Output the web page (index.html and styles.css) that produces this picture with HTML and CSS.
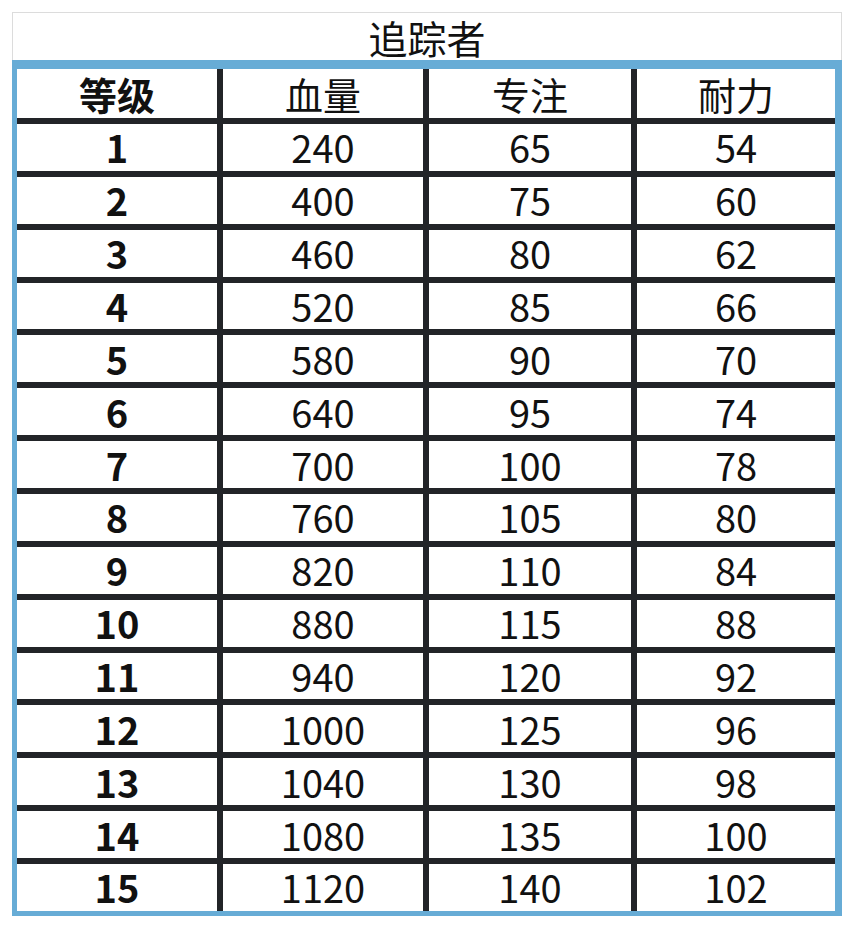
FILE: index.html
```html
<!DOCTYPE html>
<html lang="zh">
<head>
<meta charset="utf-8">
<title>追踪者</title>
<link rel="stylesheet" href="styles.css">
</head>
<body>
<div class="sheet">
  <div class="title">追踪者</div>
  <div class="table">
    <div class="cell head">等级</div><div class="cell">血量</div><div class="cell">专注</div><div class="cell">耐力</div>
    <div class="cell lv">1</div><div class="cell">240</div><div class="cell">65</div><div class="cell">54</div>
    <div class="cell lv">2</div><div class="cell">400</div><div class="cell">75</div><div class="cell">60</div>
    <div class="cell lv">3</div><div class="cell">460</div><div class="cell">80</div><div class="cell">62</div>
    <div class="cell lv">4</div><div class="cell">520</div><div class="cell">85</div><div class="cell">66</div>
    <div class="cell lv">5</div><div class="cell">580</div><div class="cell">90</div><div class="cell">70</div>
    <div class="cell lv">6</div><div class="cell">640</div><div class="cell">95</div><div class="cell">74</div>
    <div class="cell lv">7</div><div class="cell">700</div><div class="cell">100</div><div class="cell">78</div>
    <div class="cell lv">8</div><div class="cell">760</div><div class="cell">105</div><div class="cell">80</div>
    <div class="cell lv">9</div><div class="cell">820</div><div class="cell">110</div><div class="cell">84</div>
    <div class="cell lv">10</div><div class="cell">880</div><div class="cell">115</div><div class="cell">88</div>
    <div class="cell lv">11</div><div class="cell">940</div><div class="cell">120</div><div class="cell">92</div>
    <div class="cell lv">12</div><div class="cell">1000</div><div class="cell">125</div><div class="cell">96</div>
    <div class="cell lv">13</div><div class="cell">1040</div><div class="cell">130</div><div class="cell">98</div>
    <div class="cell lv">14</div><div class="cell">1080</div><div class="cell">135</div><div class="cell">100</div>
    <div class="cell lv">15</div><div class="cell">1120</div><div class="cell">140</div><div class="cell">102</div>
  </div>
</div>
</body>
</html>
```

FILE: styles.css
```css
html, body {
  margin: 0;
  padding: 0;
  background: #ffffff;
}

body {
  font-family: "Noto Sans CJK SC", "Noto Sans", sans-serif;
  color: #111111;
}

.sheet {
  width: 830px;
  margin: 12px 0 0 12px;
}

.title {
  height: 48px;
  padding-top: 2px;
  box-sizing: border-box;
  border: 1px solid #dcdcdc;
  border-bottom: none;
  display: flex;
  align-items: center;
  justify-content: center;
  font-size: 39px;
  line-height: 1;
}

.table {
  display: grid;
  grid-template-columns: 200px 200px 202px 198px;
  grid-template-rows: 49px repeat(15, 46.87px);
  gap: 6px;
  background: #222428;
  border: 5px solid #67acd6;
  border-top-width: 9px;
  border-right-width: 7px;
}

.cell {
  background: #ffffff;
  display: flex;
  align-items: center;
  justify-content: center;
  font-size: 38px;
  line-height: 1;
}

.head,
.lv {
  font-weight: 700;
}
```
